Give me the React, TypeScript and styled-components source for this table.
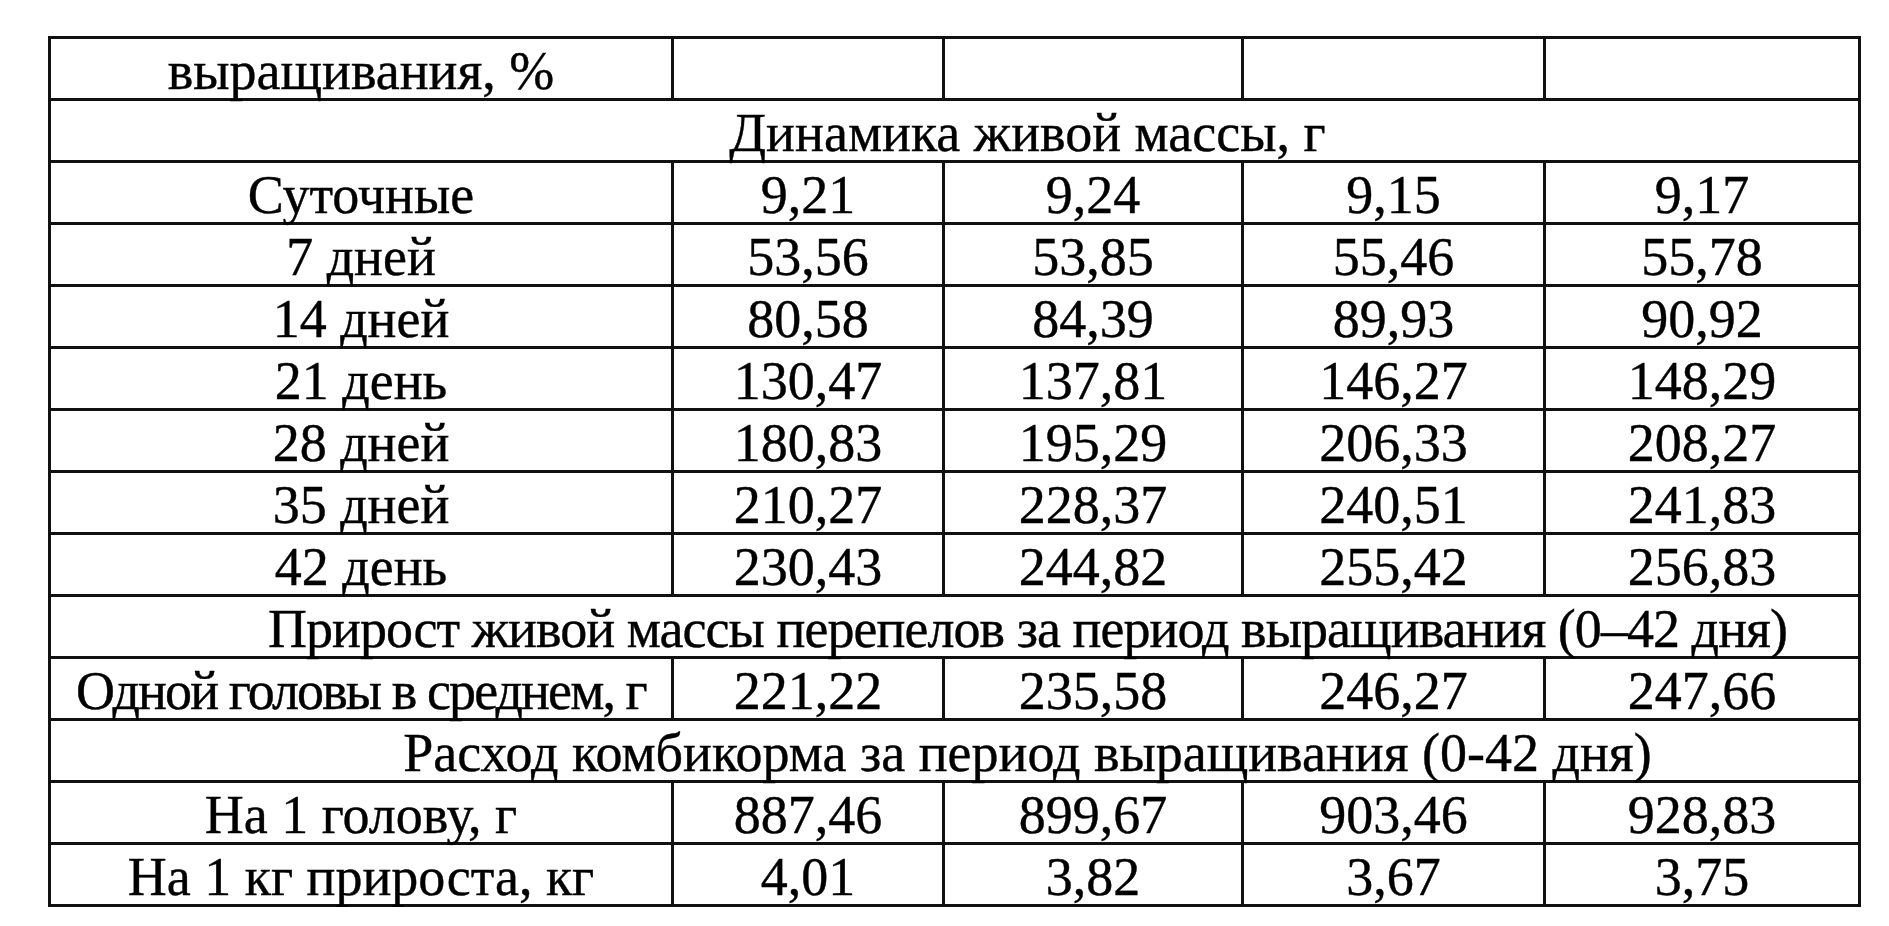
import React from 'react';
import styled, { createGlobalStyle } from 'styled-components';

const GlobalStyle = createGlobalStyle`
  html, body {
    margin: 0;
    padding: 0;
    background: #fff;
  }
  body {
    font-family: "Liberation Serif", "Times New Roman", serif;
    color: #000;
  }
`;

const Page = styled.div`
  padding: 36px 0 0 48px;
`;

const Table = styled.table`
  border-collapse: collapse;
  table-layout: fixed;
  width: 1810px;
`;

const Cell = styled.td<{ $spacing?: number }>`
  height: 55px;
  padding: 4px 0 0;
  border: 3px solid #111;
  text-align: center;
  vertical-align: middle;
  font-size: 54px;
  line-height: 54px;
  white-space: nowrap;
  letter-spacing: ${p => p.$spacing ?? 0}px;
  -webkit-text-stroke: 0.4px #000;
`;

const SectionCell = styled(Cell)`
  padding-left: 146px;
`;

const colWidths = [623, 271, 299, 302, 315];

type Row =
  | { kind: 'section'; title: string; spacing?: number }
  | { kind: 'data'; label: string; values: string[]; spacing?: number };

const rows: Row[] = [
  { kind: 'data', label: 'выращивания, %', values: ['', '', '', ''] },
  { kind: 'section', title: 'Динамика живой массы, г' },
  { kind: 'data', label: 'Суточные', values: ['9,21', '9,24', '9,15', '9,17'] },
  { kind: 'data', label: '7 дней', values: ['53,56', '53,85', '55,46', '55,78'] },
  { kind: 'data', label: '14 дней', values: ['80,58', '84,39', '89,93', '90,92'] },
  { kind: 'data', label: '21 день', values: ['130,47', '137,81', '146,27', '148,29'] },
  { kind: 'data', label: '28 дней', values: ['180,83', '195,29', '206,33', '208,27'] },
  { kind: 'data', label: '35 дней', values: ['210,27', '228,37', '240,51', '241,83'] },
  { kind: 'data', label: '42 день', values: ['230,43', '244,82', '255,42', '256,83'] },
  { kind: 'section', title: 'Прирост живой массы перепелов за период выращивания (0–42 дня)', spacing: -0.95 },
  { kind: 'data', label: 'Одной головы в среднем, г', values: ['221,22', '235,58', '246,27', '247,66'], spacing: -1.9 },
  { kind: 'section', title: 'Расход комбикорма за период выращивания (0-42 дня)' },
  { kind: 'data', label: 'На 1 голову, г', values: ['887,46', '899,67', '903,46', '928,83'] },
  { kind: 'data', label: 'На 1 кг прироста, кг', values: ['4,01', '3,82', '3,67', '3,75'] },
];

const App = () => (
  <Page>
    <GlobalStyle />
    <Table>
      <colgroup>
        {colWidths.map((w, i) => (
          <col key={i} style={{ width: w }} />
        ))}
      </colgroup>
      <tbody>
        {rows.map((row, i) =>
          row.kind === 'section' ? (
            <tr key={i}>
              <SectionCell colSpan={5} $spacing={row.spacing}>
                {row.title}
              </SectionCell>
            </tr>
          ) : (
            <tr key={i}>
              <Cell $spacing={row.spacing}>{row.label}</Cell>
              {row.values.map((v, j) => (
                <Cell key={j}>{v}</Cell>
              ))}
            </tr>
          )
        )}
      </tbody>
    </Table>
  </Page>
);

export default App;
